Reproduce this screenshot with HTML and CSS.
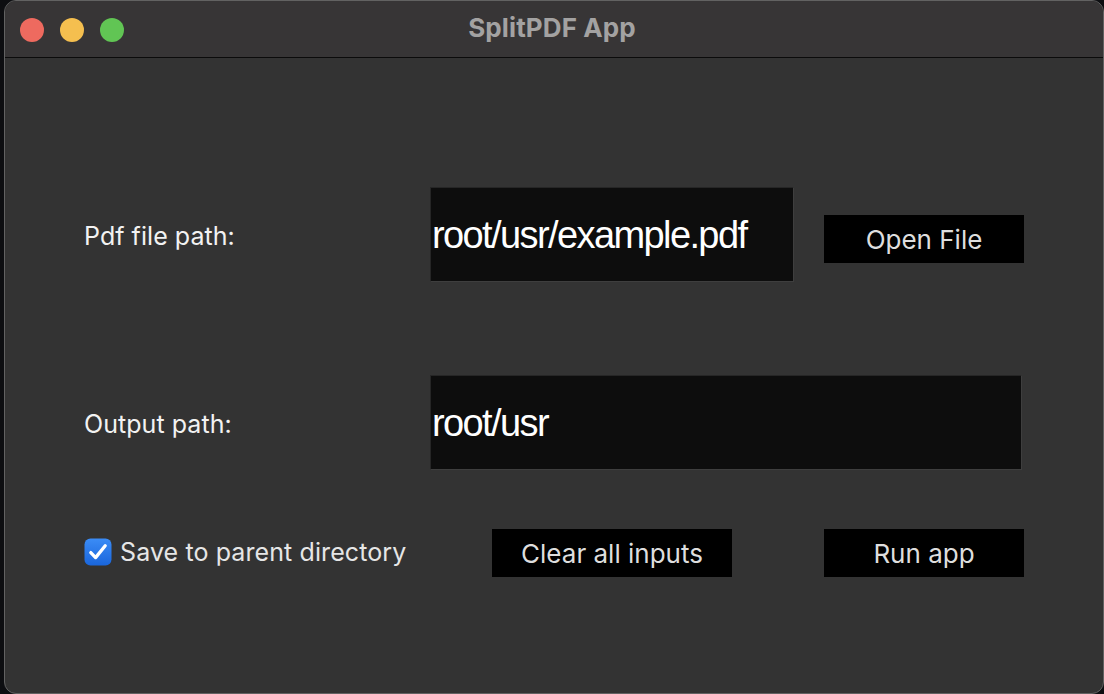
FILE: index.html
```html
<!DOCTYPE html>
<html lang="en">
<head>
<meta charset="utf-8">
<title>SplitPDF App</title>
<link rel="stylesheet" href="styles.css">
</head>
<body>
<div class="window">
  <header class="titlebar">
    <div class="lights">
      <span class="light light-red"></span>
      <span class="light light-yellow"></span>
      <span class="light light-green"></span>
    </div>
    <h1 class="title">SplitPDF App</h1>
    <div class="spacer"></div>
  </header>
  <main class="content">
    <div class="row row-pdf">
      <label class="field-label">Pdf file path:</label>
      <div class="entry entry-short">root/usr/example.pdf</div>
      <button class="btn btn-open">Open File</button>
    </div>
    <div class="row row-out">
      <label class="field-label">Output path:</label>
      <div class="entry entry-wide">root/usr</div>
    </div>
    <div class="row row-actions">
      <label class="check">
        <svg class="check-box" width="28" height="28" viewBox="0 0 28 28">
          <defs>
            <linearGradient id="cbg" x1="0" y1="0" x2="0" y2="1">
              <stop offset="0" stop-color="#3b8cf6"/>
              <stop offset="1" stop-color="#1a66dc"/>
            </linearGradient>
          </defs>
          <rect x="0.5" y="0.5" width="27" height="27" rx="6" fill="url(#cbg)"/>
          <path d="M6.8 14.6 L11.6 19.6 L21.2 7.8" fill="none" stroke="#ffffff" stroke-width="3.3" stroke-linecap="round" stroke-linejoin="round"/>
        </svg>
        <span class="check-text">Save to parent directory</span>
      </label>
      <button class="btn btn-clear">Clear all inputs</button>
      <button class="btn btn-run">Run app</button>
    </div>
  </main>
</div>
</body>
</html>
```
FILE: styles.css
```css
* {
  box-sizing: border-box;
}

html, body {
  margin: 0;
  padding: 0;
  width: 1104px;
  height: 694px;
  overflow: hidden;
  background: #0d0e11;
}

body {
  padding-left: 4px;
  font-family: Inter, "Noto Sans", sans-serif;
}

.window {
  width: 1100px;
  height: 694px;
  border: 1px solid #626262;
  border-radius: 12px;
  background: #333333;
  overflow: hidden;
  display: flex;
  flex-direction: column;
}

.titlebar {
  height: 56px;
  flex: none;
  background: #373536;
  border-bottom: 1px solid #0b0b0b;
  display: grid;
  grid-template-columns: 1fr auto 1fr;
  align-items: center;
  box-sizing: content-box;
}

.lights {
  display: flex;
  gap: 16px;
  padding-left: 15px;
  padding-top: 2px;
}

.light {
  width: 24px;
  height: 24px;
  border-radius: 50%;
  display: block;
}

.light-red { background: #ee6a5f; }
.light-yellow { background: #f5bf4f; }
.light-green { background: #61c554; }

.title {
  margin: -3px 0 0 -4px;
  font-size: 26px;
  font-weight: 700;
  color: #a3a2a2;
  letter-spacing: 0.1px;
}

.content {
  flex: 1;
  padding: 129px 0 0 79px;
  display: flex;
  flex-direction: column;
}

.row {
  display: grid;
  grid-template-columns: 346px 364px 30px 200px;
  align-items: center;
}

.row-pdf {
  height: 95px;
}

.row-out {
  height: 95px;
  margin-top: 93px;
}

.row-actions {
  height: 48px;
  margin-top: 59px;
}

.field-label {
  grid-column: 1;
  font-size: 25px;
  color: #f2f2f2;
  letter-spacing: 0.05px;
  margin-top: 3px;
}

.entry {
  height: 95px;
  background: #0d0d0d;
  border: 1px solid #262626;
  border-right-color: #3e3e3e;
  border-bottom-color: #3e3e3e;
  color: #ffffff;
  font-family: "Liberation Sans", Arial, sans-serif;
  font-size: 38px;
  letter-spacing: -1.6px;
  display: flex;
  align-items: center;
  padding-left: 1px;
  padding-top: 2px;
  white-space: nowrap;
}

.entry-short {
  grid-column: 2;
  width: 364px;
}

.entry-wide {
  grid-column: 2 / 5;
  width: 592px;
}

.btn {
  height: 48px;
  border: none;
  border-radius: 0;
  background: #000000;
  color: #dedede;
  font-family: Inter, "Noto Sans", sans-serif;
  font-size: 26px;
  letter-spacing: 0;
  padding: 0;
  display: flex;
  align-items: center;
  justify-content: center;
}

.btn-open {
  grid-column: 4;
  width: 200px;
  margin-top: 9px;
}

.btn-clear {
  grid-column: 2;
  width: 240px;
  margin-left: 62px;
}

.btn-run {
  grid-column: 4;
  width: 200px;
}

.check {
  grid-column: 1;
  display: flex;
  align-items: center;
  gap: 8px;
  margin-top: -2px;
}

.check-box {
  display: block;
  flex: none;
}

.check-text {
  font-size: 25px;
  color: #e6e6e6;
  letter-spacing: 0.1px;
}
```
